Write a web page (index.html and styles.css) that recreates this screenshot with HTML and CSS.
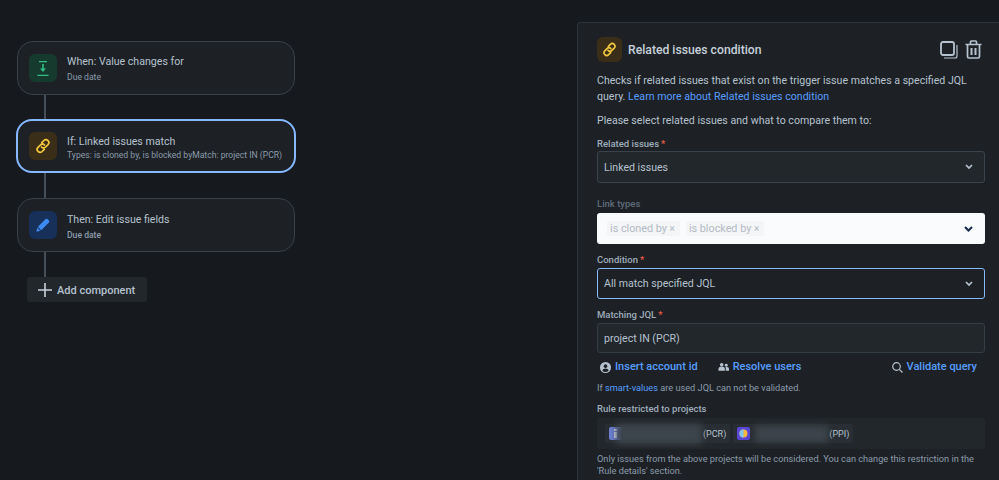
FILE: index.html
```html
<!DOCTYPE html>
<html lang="en">
<head>
<meta charset="utf-8">
<title>Related issues condition</title>
<link rel="stylesheet" href="styles.css">
</head>
<body>
<main class="page">
  <section class="flow">
    <div class="card">
      <div class="tile tile-green">
        <svg width="12" height="15" viewBox="0 0 12 15" fill="none" stroke="#2fbf84" stroke-width="1.200"><path d="M2 .6h8M.5 14.400h11"/><path d="M6 3v5" stroke-width="1.600"/><path d="M3 7.500h6L6 11z" fill="#2fbf84" stroke="none"/></svg>
      </div>
      <div class="card-text"><div class="card-title">When: Value changes for</div><div class="card-sub">Due date</div></div>
    </div>
    <div class="line line-first"></div>
    <div class="card card-active">
      <div class="tile tile-yellow">
        <svg width="16" height="16" viewBox="0 0 16 16" fill="none" stroke="#f5c93e" stroke-width="1.7" stroke-linecap="round"><path d="M6.8 4.6 8.9 2.5a2.9 2.9 0 0 1 4.1 4.1l-2.4 2.4a2.9 2.9 0 0 1-4.1 0"/><path d="M9.2 11.4 7.1 13.5A2.9 2.9 0 0 1 3 9.4L5.4 7a2.9 2.9 0 0 1 4.1 0"/></svg>
      </div>
      <div class="card-text"><div class="card-title">If: Linked issues match</div><div class="card-sub">Types: is cloned by, is blocked byMatch: project IN (PCR)</div></div>
    </div>
    <div class="line"></div>
    <div class="card card-then">
      <div class="tile tile-blue">
        <svg width="14" height="14" viewBox="0 0 15 15" fill="#3d8bf2"><path d="M10.300 1.200a1.500 1.500 0 0 1 2.100 0l1.400 1.400a1.500 1.500 0 0 1 0 2.100L5.600 13 2 9.400z"/><path d="M1.400 10.400 4.600 13.600 0.400 14.600z"/></svg>
      </div>
      <div class="card-text"><div class="card-title">Then: Edit issue fields</div><div class="card-sub card-sub-strong">Due date</div></div>
    </div>
    <div class="line"></div>
    <button class="add" type="button">
      <svg width="14" height="14" viewBox="0 0 14 14" stroke="#c7d1db" stroke-width="1.6"><path d="M7 0v14M0 7h14"/></svg>
      Add component
    </button>
  </section>

  <section class="panel">
    <header class="panel-head">
      <div class="tile-small">
        <svg width="15" height="15" viewBox="0 0 16 16" fill="none" stroke="#f5c93e" stroke-width="1.7" stroke-linecap="round"><path d="M6.8 4.6 8.9 2.5a2.9 2.9 0 0 1 4.1 4.1l-2.4 2.4a2.9 2.9 0 0 1-4.1 0"/><path d="M9.2 11.4 7.1 13.5A2.9 2.9 0 0 1 3 9.4L5.4 7a2.9 2.9 0 0 1 4.1 0"/></svg>
      </div>
      <h2 class="panel-title">Related issues condition</h2>
      <div class="panel-actions">
        <svg width="18" height="18" viewBox="0 0 18 18" fill="none" stroke="#b6c2cf" stroke-width="1.8"><rect x="1" y="1" width="13" height="13" rx="2"/><path d="M17 4v11a2 2 0 0 1-2 2H4" stroke-width="1.2"/></svg>
        <svg width="17" height="19" viewBox="0 0 17 19" fill="none" stroke="#b6c2cf" stroke-width="1.7"><path d="M0.5 4.5h16M5.5 4V2a1 1 0 0 1 1-1h4a1 1 0 0 1 1 1v2M2.500 5v11.500a1.500 1.500 0 0 0 1.500 1.500h9a1.500 1.500 0 0 0 1.500-1.500V5"/><path d="M6.500 8v7M10.500 8v7" stroke-width="2"/></svg>
      </div>
    </header>
    <p class="desc">Checks if related issues that exist on the trigger issue matches a specified JQL query. <a class="link" href="#">Learn more about Related issues condition</a></p>
    <p class="desc desc-second">Please select related issues and what to compare them to:</p>

    <div class="label label-first">Related issues<span class="req">*</span></div>
    <div class="select select-first"><span>Linked issues</span><svg class="chev" width="8" height="6" viewBox="0 0 8 6" fill="none" stroke="#b6c2cf" stroke-width="1.7"><path d="M1 1l3 3 3-3"/></svg></div>

    <div class="label label-dim">Link types</div>
    <div class="multi">
      <span class="chip">is cloned by <i>×</i></span>
      <span class="chip">is blocked by <i>×</i></span>
      <svg class="chev" width="9" height="6" viewBox="0 0 9 6" fill="none" stroke="#172b4d" stroke-width="2"><path d="M1 1l3.500 3.500L8 1"/></svg>
    </div>

    <div class="label label-cond">Condition<span class="req">*</span></div>
    <div class="select select-focus"><span>All match specified JQL</span><svg class="chev" width="8" height="6" viewBox="0 0 8 6" fill="none" stroke="#b6c2cf" stroke-width="1.7"><path d="M1 1l3 3 3-3"/></svg></div>

    <div class="label label-jql">Matching JQL<span class="req">*</span></div>
    <div class="input">project IN (PCR)</div>

    <div class="tools">
      <a class="tool" href="#"><svg width="11" height="11" viewBox="0 0 12 12"><circle cx="6" cy="6" r="6" fill="#b6c2cf"/><circle cx="6" cy="4.500" r="2" fill="#1d2125"/><path d="M2.500 9.500a3.600 3 0 0 1 7 0 5 5 0 0 1-7 0z" fill="#1d2125"/></svg>Insert account id</a>
      <a class="tool" href="#"><svg width="11" height="10" viewBox="0 0 12 10" fill="#b6c2cf"><circle cx="4" cy="2.500" r="2"/><circle cx="9" cy="3" r="1.600"/><path d="M0.500 9V7.500a3 2.500 0 0 1 7 0V9zM8.500 9V6.500q0-1-.7-1.500H10a2 2 0 0 1 2 2v2z"/></svg>Resolve users</a>
      <a class="tool tool-end" href="#"><svg width="11" height="11" viewBox="0 0 11 11" fill="none" stroke="#b6c2cf" stroke-width="1.200"><circle cx="4.500" cy="4.500" r="3.800"/><path d="M7.300 7.300 10.500 10.500"/></svg>Validate query</a>
    </div>
    <p class="hint">If <a class="link" href="#">smart-values</a> are used JQL can not be validated.</p>

    <div class="label label-rule">Rule restricted to projects</div>
    <div class="projects">
      <span class="project">
        <svg width="13" height="13" viewBox="0 0 13 13"><rect width="13" height="13" rx="2" fill="#6d7fd1"/><rect x="5" y="5" width="3" height="6" fill="#dfe4f7"/><rect x="5" y="2" width="3" height="2" fill="#dfe4f7"/></svg>
        <span class="blur blur-a"></span>(PCR)
      </span>
      <span class="project">
        <svg width="13" height="13" viewBox="0 0 13 13"><rect width="13" height="13" rx="2" fill="#5a46d6"/><circle cx="6.500" cy="6.500" r="4" fill="#f6b73c"/><path d="M6.500 2.500a4 4 0 0 0 0 8z" fill="#7ec8f0"/></svg>
        <span class="blur blur-b"></span>(PPI)
      </span>
    </div>
    <p class="hint hint-last">Only issues from the above projects will be considered. You can change this restriction in the 'Rule details' section.</p>
  </section>
</main>
</body>
</html>
```

FILE: styles.css
```css
* { box-sizing: border-box; }
html, body { margin: 0; height: 100%; overflow: hidden; }
body {
  background: #16191d;
  color: #b6c2cf;
  font-family: Roboto, "Noto Sans", sans-serif;
  font-size: 10.6px;
}
.page {
  display: flex;
  align-items: flex-start;
  justify-content: space-between;
  padding: 22px 0 0 17px;
  height: 480px;
}
.flow {
  width: 278px;
  margin-top: 19px;
  display: flex;
  flex-direction: column;
}
.card {
  height: 54px;
  border: 1px solid #384048;
  border-radius: 16px;
  background: #1d2125;
  display: flex;
  align-items: center;
  padding: 0 11px;
  gap: 10px;
}
.card-active {
  border: 2px solid #85b8ff;
  margin: 0 -1px;
}
.tile {
  width: 28px;
  height: 28px;
  border-radius: 6px;
  display: flex;
  align-items: center;
  justify-content: center;
  flex: none;
}
.tile-green { background: #173a2f; }
.tile-yellow { background: #3a2e18; }
.tile-blue { background: #16305a; }
.card-text { padding-top: 1px; white-space: nowrap; }
.card-then .card-text { padding-top: 3px; }
.card-title { font-size: 10.6px; line-height: 16px; color: #b6c2cf; }
.card-active .card-title { margin: 2px 0 -2px; }
.card-sub { font-size: 8.6px; line-height: 14px; color: #8c9bab; }
.card-sub-strong { font-weight: 500; }
.line { width: 2px; height: 25px; margin-left: 27px; background: #454f59; }
.line-first { height: 24px; }
.add {
  align-self: flex-start;
  margin-left: 10px;
  height: 25px;
  width: 120px;
  padding: 1px 0 0 11px;
  border: 0;
  border-radius: 3px;
  background: #22272c;
  color: #b6c2cf;
  font: 500 11px Roboto, sans-serif;
  display: flex;
  align-items: center;
  gap: 5px;
}
.panel {
  width: 422px;
  height: 470px;
  flex: none;
  background: #1d2125;
  border-top: 1px solid #2c333a;
  border-left: 1px solid #2c333a;
  border-top-left-radius: 4px;
  padding: 14px 14px 0 19px;
}
.panel-head { display: flex; align-items: center; gap: 6px; height: 25px; }
.tile-small {
  width: 25px;
  height: 25px;
  border-radius: 6px;
  background: #3a2e18;
  display: flex;
  align-items: center;
  justify-content: center;
}
.panel-title { margin: 0; font-size: 12.2px; font-weight: 500; color: #c7d1db; }
.panel-actions { margin-left: auto; margin-right: 3px; display: flex; gap: 7px; align-items: center; }
.desc { margin: 0; font-size: 10.6px; line-height: 16px; color: #b6c2cf; }
.panel-head + .desc { margin-top: 11px; }
.desc-second { margin-top: 8px; }
.link { color: #579dff; text-decoration: none; }
.label { font-size: 9.500px; font-weight: 500; line-height: 13px; color: #9fadbc; }
.label-first { margin-top: 8px; }
.label-dim { margin-top: 14px; color: #5d6b7a; }
.label-cond { margin-top: 9px; }
.label-jql { margin-top: 9px; }
.label-rule { margin-top: 8px; }
.req { color: #ef5c48; margin-left: 2px; }
.select {
  margin-top: 1px;
  height: 31px;
  border: 1px solid #3a434c;
  border-radius: 3px;
  background: #22272b;
  display: flex;
  align-items: center;
  justify-content: space-between;
  padding: 0 11px 0 6px;
  font-size: 10.6px;
  color: #b6c2cf;
}
.select-first { height: 32px; }
.select-focus { margin-top: 2px; border: 1px solid #85b8ff; background: #1d2125; }
.multi {
  margin-top: 3px;
  height: 31px;
  border-radius: 3px;
  background: #fafbfc;
  display: flex;
  align-items: center;
  gap: 6px;
  padding: 0 12px 0 10px;
}
.multi .chev { margin-left: auto; }
.chip {
  background: #f4f5f7;
  color: #b3bac5;
  padding: 0 5px 0 3px;
  height: 15px;
  line-height: 15px;
  border-radius: 2px;
  font-size: 10.8px;
}
.chip i { font-style: normal; font-size: 10px; }
.input {
  margin-top: 2px;
  height: 30px;
  border: 1px solid #343c44;
  border-radius: 3px;
  background: #22272b;
  padding: 0 6px;
  display: flex;
  align-items: center;
  font-size: 10.6px;
  color: #b6c2cf;
}
.tools { display: flex; gap: 20px; margin-top: 6px; padding: 0 8px 0 3px; }
.tool {
  display: flex;
  align-items: center;
  gap: 4px;
  color: #579dff;
  font-size: 11px;
  font-weight: 500;
  line-height: 16px;
  text-decoration: none;
}
.tool-end { margin-left: auto; }
.hint { margin: 7px 0 0; font-size: 9.2px; line-height: 12px; color: #8c9bab; }
.projects {
  margin-top: 3px;
  height: 31px;
  border-radius: 3px;
  background: #22272b;
  padding: 6px 8px;
  display: flex;
  gap: 3px;
}
.project {
  display: flex;
  align-items: center;
  height: 19px;
  padding: 0 4px;
  background: #282e33;
  border-radius: 2px;
  font-size: 9px;
  color: #b6c2cf;
}
.blur { display: block; background: #3c444c; filter: blur(3px); }
.blur-a { width: 86px; height: 20px; margin: 0 1px 0 -6px; }
.blur-b { width: 73px; height: 16px; margin: 0 1px 0 5px; }
.hint-last { margin-top: 4px; line-height: 12px; }
```
